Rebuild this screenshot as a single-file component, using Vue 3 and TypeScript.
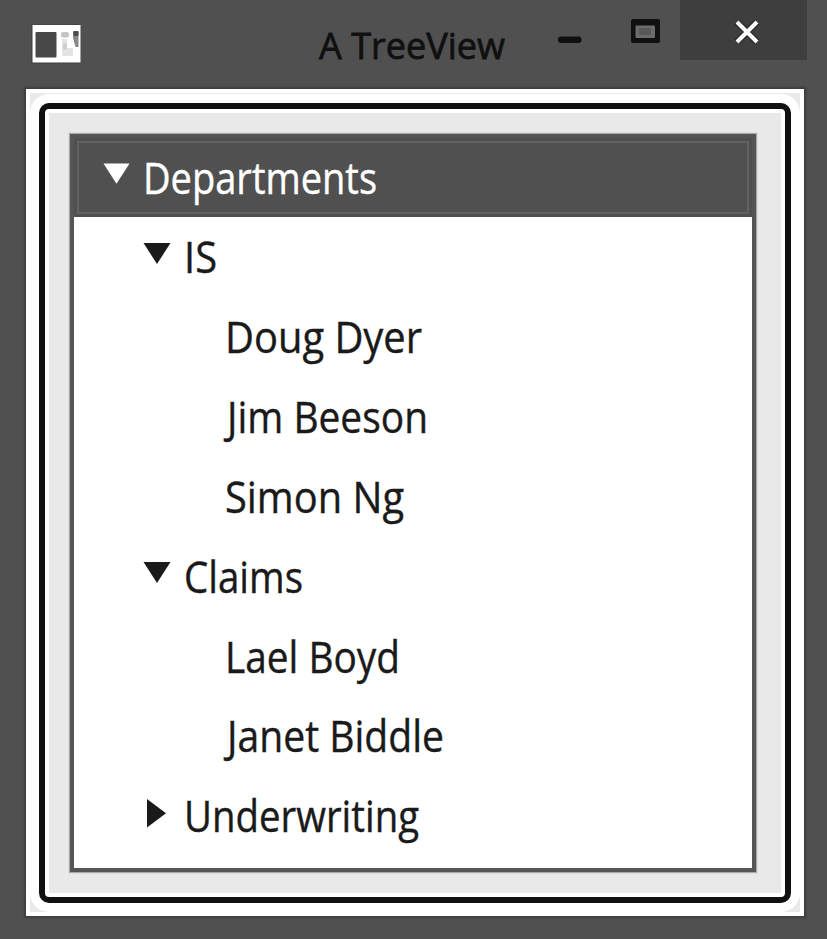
<script setup lang="ts">
interface TreeRow {
  label: string
  start: number
  width: number
  level: number
  state: 'open' | 'closed' | 'leaf'
}

const rows: TreeRow[] = [
  { label: 'Departments', start: 0, width: 234, level: 0, state: 'open' },
  { label: 'IS', start: 0, width: 33, level: 1, state: 'open' },
  { label: 'Doug Dyer', start: 0, width: 197, level: 2, state: 'leaf' },
  { label: 'Jim Beeson', start: 2, width: 201, level: 2, state: 'leaf' },
  { label: 'Simon Ng', start: 0, width: 179, level: 2, state: 'leaf' },
  { label: 'Claims', start: 0, width: 119, level: 1, state: 'open' },
  { label: 'Lael Boyd', start: 0, width: 175, level: 2, state: 'leaf' },
  { label: 'Janet Biddle', start: 2, width: 217, level: 2, state: 'leaf' },
  { label: 'Underwriting', start: 0, width: 235, level: 1, state: 'closed' },
]
</script>

<template>
  <div class="window">
    <header class="titlebar">
      <svg class="app-icon" width="50" height="40" viewBox="0 0 50 40">
        <rect x="0.5" y="0.5" width="49" height="39" rx="2" fill="#3c3c3c" />
        <rect x="1.5" y="1" width="48" height="37.5" fill="#fff" />
        <rect x="4.5" y="8" width="21" height="25.5" rx="1" fill="#484848" />
        <rect x="30" y="8" width="8" height="5.5" rx="2" fill="#c4c4c4" />
        <path d="M31 15h5v9h6v8H31z" fill="#e4e4e4" />
        <rect x="32" y="19" width="4" height="7" rx="2" fill="#cfcfcf" />
        <path d="M42 7h5.500v16h-3l-2.500-9z" fill="#888" />
        <rect x="42.500" y="7" width="5" height="5" rx="1.500" fill="#4c4c4c" />
      </svg>
      <svg class="title" width="229" height="80" viewBox="0 0 229 80">
        <text x="9" y="58.500" textLength="186" lengthAdjust="spacingAndGlyphs">A TreeView</text>
      </svg>
      <div class="controls">
        <svg width="24" height="8" viewBox="0 0 24 8" class="minimize">
          <rect x="0" y="0.500" width="23.500" height="6.500" rx="3" fill="#101010" />
        </svg>
        <svg width="29" height="24" viewBox="0 0 29 24" class="maximize">
          <rect x="0" y="0" width="29" height="24" rx="2" fill="#101010" />
          <rect x="4.500" y="6.500" width="19.500" height="12.500" rx="1" fill="#6c6c6c" />
          <rect x="8" y="9" width="12" height="7" fill="#585858" />
        </svg>
        <div class="close">
          <svg width="26" height="26" viewBox="0 0 26 26">
            <path d="M3 3L23 23M23 3L3 23" stroke="#252525" stroke-width="6.500" />
            <path d="M3 3L23 23M23 3L3 23" stroke="#fff" stroke-width="4" />
          </svg>
        </div>
      </div>
    </header>
    <main class="client">
      <div class="frame">
        <div class="tree">
          <div
            v-for="row in rows"
            :key="row.label"
            class="row"
            :class="['level-' + row.level, { selected: row.level === 0 }]"
          >
            <svg v-if="row.state !== 'leaf'" class="arrow" width="28" height="32" viewBox="0 0 28 32">
              <path v-if="row.state === 'open'" d="M0.500 3H27.500L14 24Z" />
              <path v-else d="M4 0V28.500L23 14.250Z" />
            </svg>
            <svg class="label" :width="row.width + 8" height="80">
              <text :x="row.start" y="56" :textLength="row.width" lengthAdjust="spacingAndGlyphs">{{ row.label }}</text>
            </svg>
          </div>
        </div>
      </div>
    </main>
  </div>
</template>

<style>
body {
  margin: 0;
  background: #505050;
}
</style>

<style scoped>
.window {
  box-sizing: border-box;
  width: 827px;
  height: 939px;
  padding: 0 20px 23px 26px;
  background: #505050;
  font-family: "Open Sans", "Noto Sans", sans-serif;
}
.titlebar {
  display: flex;
  align-items: flex-start;
  height: 89px;
}
.app-icon {
  flex: none;
  margin: 24px 0 0 5px;
}
.title {
  flex: none;
  margin-left: 229px;
  font-size: 37px;
  fill: #101010;
  stroke: #101010;
  stroke-width: 0.8px;
}
.controls {
  display: flex;
  flex: none;
  align-items: flex-start;
  margin-left: 19px;
}
.minimize {
  flex: none;
  margin-top: 36px;
}
.maximize {
  flex: none;
  margin: 19px 0 0 49px;
}
.close {
  flex: none;
  display: flex;
  justify-content: center;
  width: 127px;
  height: 60px;
  margin-left: 20px;
  background: #3e3e3e;
}
.close svg {
  margin: 19px 0 0 6px;
}
.client {
  box-sizing: border-box;
  width: 778px;
  height: 827px;
  border: 4px solid #fff;
  padding: 9.500px 9px 9px 8.500px;
  background: #e9e9e9;
  box-shadow: 0 0 2px 2px #3e3e3e;
}
.frame {
  box-sizing: border-box;
  height: 100%;
  padding: 25px 29px 25.500px 25.500px;
  border: 6.500px solid #101010;
  border-radius: 10px;
  background: #e9e9e9;
  box-shadow: inset 0 0 0 4px #fff, 0 0 0 9px #fff;
}
.tree {
  box-sizing: border-box;
  height: 100%;
  border: 4px solid #555;
  background: #fff;
  box-shadow: 0 0 1px 1px #aaa;
}
.row {
  box-sizing: border-box;
  display: flex;
  height: 79.850px;
  font-size: 43px;
  fill: #1a1a1a;
}
.row.selected {
  background: #505050;
  outline: 2px solid #626262;
  outline-offset: -5px;
  fill: #fff;
}
.level-0 {
  padding-left: 29px;
}
.level-1 {
  padding-left: 70px;
}
.level-2 {
  padding-left: 151px;
}
.arrow {
  flex: none;
  margin: 22.500px 13px 0 0;
}
.level-1 .arrow {
  margin-left: -1px;
}
.selected .arrow {
  width: 27px;
}
.label {
  flex: none;
  overflow: visible;
  stroke: #1a1a1a;
  stroke-width: 0.4px;
}
.selected .label {
  stroke: #fff;
}
</style>
